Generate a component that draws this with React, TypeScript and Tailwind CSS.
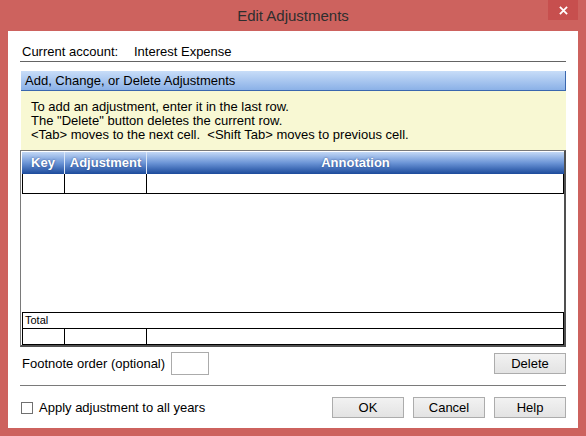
import type { ReactNode } from 'react'

function WinButton({ children }: { children: ReactNode }) {
  return (
    <button
      type="button"
      className="flex h-[21px] w-[72px] items-center justify-center border border-[#acacac] bg-gradient-to-b from-[#f2f2f2] to-[#e3e3e3] text-[13px] leading-none text-black"
    >
      {children}
    </button>
  )
}

export default function App() {
  return (
    <div
      className="flex h-[436px] w-[586px] flex-col bg-[#cd625e] text-black"
      style={{ fontFamily: '"Liberation Sans", Arial, sans-serif' }}
    >
      {/* title bar */}
      <div className="flex h-[31px] shrink-0 items-start">
        <div className="w-[38px]" />
        <div className="flex h-[31px] flex-1 items-center justify-center pt-px text-[15px] text-[#2e2e2e]">
          Edit Adjustments
        </div>
        <div className="mr-[8px] flex h-[20px] w-[30px] items-center justify-center bg-[#c74f4e]">
          <svg viewBox="0 0 10 10" className="h-[9px] w-[9px]" fill="none" stroke="white" strokeWidth="2">
            <path d="M1 1 L9 9 M9 1 L1 9" />
          </svg>
        </div>
      </div>

      {/* client area */}
      <div className="mx-[8px] mb-[8px] flex flex-1 flex-col bg-white px-3">
        <div className="mt-[13px] flex h-[15px] items-center pl-[2px] text-[13px]">
          <span className="w-[112px]">Current account:</span>
          <span>Interest Expense</span>
        </div>
        <div className="mt-[2px] h-px bg-[#646464]" />

        {/* section header */}
        <div className="mt-[9px] ml-px flex h-[20px] items-center border-b border-r border-[#3a67ae] bg-gradient-to-b from-[#c8ddf8] to-[#8bb1e7] pl-[4px] text-[13px]">
          Add, Change, or Delete Adjustments
        </div>
        <div className="ml-px h-[59px] bg-[#f8f8d3] pl-[10px] pt-[9px] text-[13px] leading-[14px]">
          <div>To add an adjustment, enter it in the last row.</div>
          <div>The "Delete" button deletes the current row.</div>
          <div className="whitespace-pre">{'<Tab> moves to the next cell.  <Shift Tab> moves to previous cell.'}</div>
        </div>

        {/* grid */}
        <div className="flex h-[197px] flex-col border-l border-t border-r-2 border-b-2 border-l-[#7a7a7a] border-t-[#7a7a7a] border-r-[#505050] border-b-[#505050] pl-px pt-px">
          <div className="flex h-[22px] bg-gradient-to-b from-[#c3d8f5] via-[#6b94d6] to-[#1b4a9b] text-[13px] font-bold text-white [text-shadow:0_0_2px_rgba(0,30,90,0.6)]">
            <div className="flex w-[43px] items-center justify-center border-r border-[#dbe7f7]">Key</div>
            <div className="flex w-[82px] items-center justify-center border-r border-[#dbe7f7]">Adjustment</div>
            <div className="flex flex-1 items-center justify-center">Annotation</div>
          </div>
          <div className="flex h-[20px] border-x border-b border-black">
            <div className="w-[42px] border-r border-black" />
            <div className="w-[82px] border-r border-black" />
            <div className="flex-1" />
          </div>
          <div className="flex-1" />
          <div className="flex h-[17px] items-center border border-black pl-[2px] text-[11px]">Total</div>
          <div className="flex h-[16px] border-x border-b border-black">
            <div className="w-[42px] border-r border-black" />
            <div className="w-[82px] border-r border-black" />
            <div className="flex-1" />
          </div>
        </div>

        {/* footnote */}
        <div className="mt-[5px] flex h-[23px] items-center">
          <span className="w-[151px] pl-[2px] text-[13px]">Footnote order (optional)</span>
          <div className="h-[23px] w-[38px] border border-[#ababab] bg-white" />
          <div className="flex-1" />
          <WinButton>Delete</WinButton>
        </div>
        <div className="mt-[10px] h-px bg-[#7a7a7a]" />

        {/* bottom */}
        <div className="mt-[11px] flex h-[21px] items-center">
          <div className="ml-px h-[12px] w-[12px] border border-[#707070] bg-white" />
          <span className="ml-[6px] text-[13px]">Apply adjustment to all years</span>
          <div className="flex-1" />
          <div className="flex gap-[9px]">
            <WinButton>OK</WinButton>
            <WinButton>Cancel</WinButton>
            <WinButton>Help</WinButton>
          </div>
        </div>
      </div>
    </div>
  )
}
